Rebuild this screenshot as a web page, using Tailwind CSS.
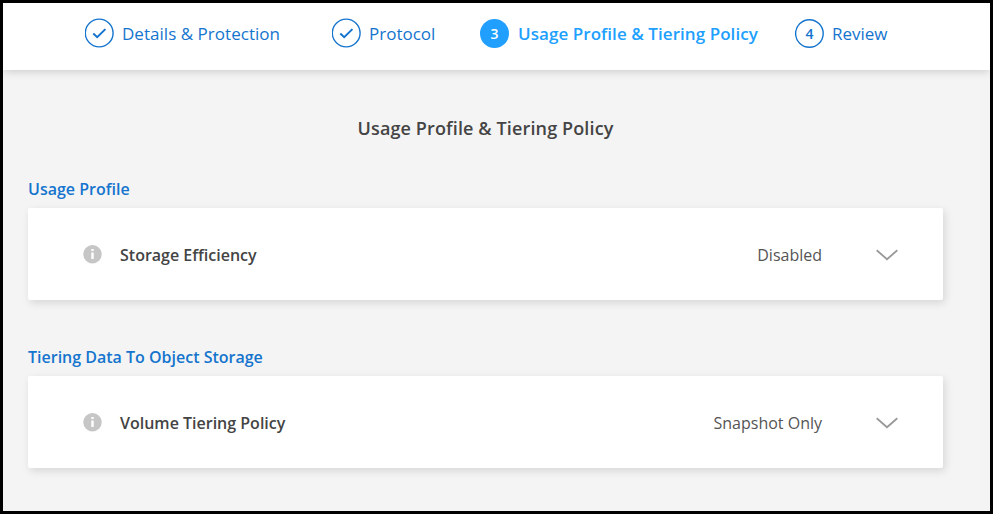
<!DOCTYPE html>
<html lang="en">
<head>
<meta charset="utf-8">
<title>Usage Profile &amp; Tiering Policy</title>
<script src="https://cdn.jsdelivr.net/npm/@tailwindcss/browser@4"></script>
</head>
<body class="h-[514px] w-[993px] overflow-hidden border-[3px] border-black bg-[#f4f4f4] font-['Open_Sans',sans-serif] text-[#444]">
<header class="relative flex h-[67px] items-center bg-white pb-[7px] pl-[82px] text-[17px] leading-[26px] whitespace-nowrap text-[#1474ce] shadow-[0_1px_9px_rgba(0,0,0,0.18)]">
  <div class="flex w-[247px] items-center gap-[7px]">
    <svg class="size-[30px] shrink-0" viewBox="0 0 30 30" fill="none" stroke="currentColor"><circle cx="14.2" cy="15" r="13.9" stroke-width="1.4"/><path d="M8.3 15.5l3.9 3.7 8.2-8.1" stroke-width="2"/></svg>
    <span class="pt-[2px] tracking-[0.03px]">Details &amp; Protection</span>
  </div>
  <div class="flex w-[148px] items-center gap-[7px]">
    <svg class="size-[30px] shrink-0" viewBox="0 0 30 30" fill="none" stroke="currentColor"><circle cx="14.2" cy="15" r="13.9" stroke-width="1.4"/><path d="M8.3 15.5l3.9 3.7 8.2-8.1" stroke-width="2"/></svg>
    <span class="pt-[2px]">Protocol</span>
  </div>
  <div class="flex w-[315px] items-center gap-[9px] font-semibold text-[#209fff]">
    <span class="flex size-[29px] shrink-0 items-center justify-center rounded-full bg-[#209fff] pt-[2px] text-[14px] text-white">3</span>
    <span class="pt-[2px] tracking-[0.06px]">Usage Profile &amp; Tiering Policy</span>
  </div>
  <div class="flex items-center gap-[8px]">
    <span class="relative flex size-[29px] shrink-0 items-center justify-center pt-[2px] text-[14px] font-semibold">
      <svg class="absolute inset-0 size-[29px]" viewBox="0 0 29 29" fill="none" stroke="currentColor"><circle cx="14.4" cy="14.5" r="13.8" stroke-width="1.4"/></svg>4</span>
    <span class="pt-[2px]">Review</span>
  </div>
</header>
<main class="pr-[47px] pl-[25px]">
  <h1 class="pt-[46px] text-center text-[18px] leading-[24px] font-semibold tracking-[0.13px]">Usage Profile &amp; Tiering Policy</h1>
  <section class="mt-[35px]">
    <h2 class="h-[33px] text-[16px] leading-[28px] font-semibold text-[#1474ce]">Usage Profile</h2>
    <div class="flex h-[92px] items-center rounded-[2px] bg-white pr-[45px] pl-[55px] text-[16px] shadow-[2px_3px_8px_rgba(0,0,0,0.12)]">
      <svg class="size-[19px]" viewBox="0 0 19 19"><circle cx="9.5" cy="9.2" r="9.2" fill="#c6c6c6"/><path d="M8.3 4h2.4v2H8.3zM8.3 7.5h2.4v6.5H8.3z" fill="#fff"/></svg>
      <span class="ml-[18px] pt-px font-semibold">Storage Efficiency</span>
      <span class="ml-auto pt-px text-[#555]">Disabled</span>
      <svg class="mt-[2px] ml-[54px] h-[12px] w-[22px]" viewBox="0 0 22 12" fill="none" stroke="#999" stroke-width="1.8"><path d="M.7 1.3L11 10.2l10.3-8.9"/></svg>
    </div>
  </section>
  <section class="mt-[43px]">
    <h2 class="h-[33px] text-[16px] leading-[28px] font-semibold text-[#1474ce]">Tiering Data To Object Storage</h2>
    <div class="flex h-[92px] items-center rounded-[2px] bg-white pr-[45px] pl-[55px] text-[16px] shadow-[2px_3px_8px_rgba(0,0,0,0.12)]">
      <svg class="size-[19px]" viewBox="0 0 19 19"><circle cx="9.5" cy="9.2" r="9.2" fill="#c6c6c6"/><path d="M8.3 4h2.4v2H8.3zM8.3 7.5h2.4v6.5H8.3z" fill="#fff"/></svg>
      <span class="ml-[18px] pt-px font-semibold">Volume Tiering Policy</span>
      <span class="ml-auto pt-px text-[#555]">Snapshot Only</span>
      <svg class="mt-[2px] ml-[54px] h-[12px] w-[22px]" viewBox="0 0 22 12" fill="none" stroke="#999" stroke-width="1.8"><path d="M.7 1.3L11 10.2l10.3-8.9"/></svg>
    </div>
  </section>
</main>
</body>
</html>
